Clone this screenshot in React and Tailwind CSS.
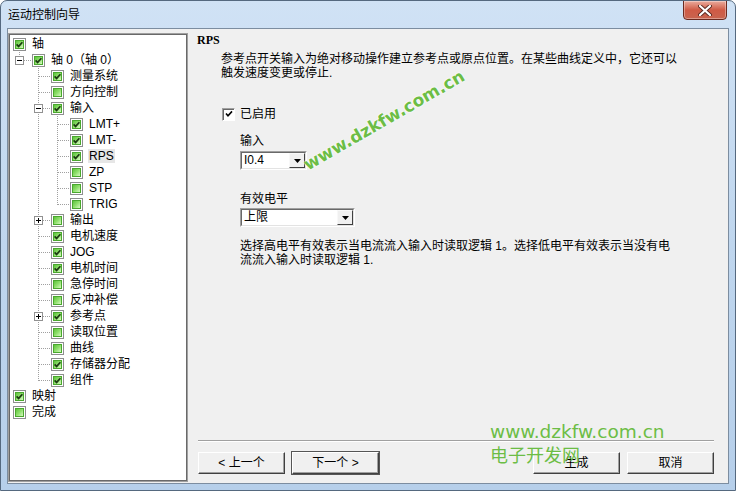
const rows = [
  { t: "轴", g: [], c: 1 },
  { t: "轴 0（轴 0）", g: ["l"], c: 1, e: "-" },
  { t: "测量系统", g: ["n", "t"], c: 1 },
  { t: "方向控制", g: ["n", "t"], c: 0 },
  { t: "输入", g: ["n", "t"], c: 1, e: "-" },
  { t: "LMT+", g: ["n", "v", "t"], c: 1 },
  { t: "LMT-", g: ["n", "v", "t"], c: 1 },
  { t: "RPS", g: ["n", "v", "t"], c: 1, sel: true },
  { t: "ZP", g: ["n", "v", "t"], c: 0 },
  { t: "STP", g: ["n", "v", "t"], c: 0 },
  { t: "TRIG", g: ["n", "v", "l"], c: 0 },
  { t: "输出", g: ["n", "t"], c: 0, e: "+" },
  { t: "电机速度", g: ["n", "t"], c: 1 },
  { t: "JOG", g: ["n", "t"], c: 1 },
  { t: "电机时间", g: ["n", "t"], c: 1 },
  { t: "急停时间", g: ["n", "t"], c: 0 },
  { t: "反冲补偿", g: ["n", "t"], c: 0 },
  { t: "参考点", g: ["n", "t"], c: 1, e: "+" },
  { t: "读取位置", g: ["n", "t"], c: 0 },
  { t: "曲线", g: ["n", "t"], c: 0 },
  { t: "存储器分配", g: ["n", "t"], c: 1 },
  { t: "组件", g: ["n", "l"], c: 1 },
  { t: "映射", g: [], c: 1 },
  { t: "完成", g: [], c: 0 },
];

// one indent cell of the tree: dotted connectors + optional expander box
function Guide({ type, exp }) {
  const dot = { stroke: "#a0a0a0", strokeDasharray: "1 1" };
  return (
    <svg width="19" height="16" className="shrink-0" shapeRendering="crispEdges">
      {(type === "v" || type === "t") && <line x1="6.5" y1="0" x2="6.5" y2="16" {...dot} />}
      {type === "l" && <line x1="6.5" y1="0" x2="6.5" y2="9" {...dot} />}
      {(type === "t" || type === "l") && <line x1="7" y1="8.5" x2="19" y2="8.5" {...dot} />}
      {exp && (
        <g>
          <rect x="2.5" y="4.5" width="8" height="8" fill="#fff" stroke="#919191" />
          <line x1="4" y1="8.5" x2="9" y2="8.5" stroke="#000" />
          {exp === "+" && <line x1="6.5" y1="6" x2="6.5" y2="11" stroke="#000" />}
        </g>
      )}
    </svg>
  );
}

function GreenBox({ checked }) {
  return (
    <span className="flex h-[13px] w-[13px] shrink-0 border border-[#8e8f8f] bg-white p-[1px]">
      <span className="flex flex-1 items-center justify-center border border-[#4aa82e] bg-gradient-to-br from-[#5cc23a] via-[#8fe06c] to-[#d6f8c0]">
        {checked ? (
          <svg width="7" height="7" viewBox="0 0 7 7">
            <path d="M0.6 3.4 L2.6 5.4 L6.4 1.2" fill="none" stroke="#1c3a12" strokeWidth="1.7" />
          </svg>
        ) : null}
      </span>
    </span>
  );
}

function Tree() {
  return (
    <div className="mt-[4px] mb-[1px] w-[180px] shrink-0 border border-[#a0a0a0]">
      <div className="h-full border border-[#696969] bg-white pt-[1px] pl-[3px]">
        {rows.map((r, i) => (
          <div key={i} className="flex h-[16px] items-center">
            {r.g.map((g, k) => (
              <Guide key={k} type={g} exp={k === r.g.length - 1 ? r.e : null} />
            ))}
            <GreenBox checked={r.c} />
            <span
              className={
                "ml-[5px] whitespace-nowrap px-[1px] leading-[14px] " +
                (r.sel ? "bg-[#e6e6e6]" : "")
              }
            >
              {r.t}
            </span>
          </div>
        ))}
      </div>
    </div>
  );
}

function Combo({ w, value }) {
  return (
    <div
      className={
        "flex h-[19px] border border-t-[#a0a0a0] border-l-[#a0a0a0] border-r-white border-b-white " + w
      }
    >
      <div className="flex flex-1 border border-t-[#696969] border-l-[#696969] border-r-[#e3e3e3] border-b-[#e3e3e3] bg-white">
        <span className="flex-1 pl-[2px] leading-[15px]">{value}</span>
        <span className="flex w-[16px] items-center justify-center border border-t-[#f8f8f8] border-l-[#f8f8f8] border-r-[#404040] border-b-[#404040] bg-[#f0f0f0]">
          <svg width="7" height="4" viewBox="0 0 7 4">
            <path d="M0 0 H7 L3.5 4 Z" fill="#000" />
          </svg>
        </span>
      </div>
    </div>
  );
}

function Btn({ children, def }) {
  return (
    <button
      className={
        "h-[22px] w-[87px] border border-t-white border-l-white border-r-[#404040] border-b-[#404040] bg-[#f0f0f0] leading-[14px] shadow-[inset_-1px_-1px_0_#a0a0a0] " +
        (def ? "outline outline-1 outline-[#555]" : "")
      }
    >
      {children}
    </button>
  );
}

export default function App() {
  return (
    <div className="relative flex h-[491px] w-[736px] flex-col overflow-hidden rounded-t-[7px] border border-[#55697f] bg-gradient-to-b from-[#d0e2f5] via-[#bfd6ee] to-[#b6cfea] font-['Liberation_Sans','Noto_Sans_CJK_SC',sans-serif] text-[12px] text-black">
      {/* title bar */}
      <div className="relative flex h-[27px] shrink-0 items-center pl-[7px]">
        <span className="leading-[14px]">运动控制向导</span>
        <div className="absolute right-[8px] top-[-1px] flex h-[20px] w-[44px] items-center justify-center rounded-b-[4px] border border-[#6b2a20] bg-gradient-to-b from-[#e9ab9d] via-[#cf5a45] to-[#c8644f] shadow-[inset_0_0_0_1px_rgba(255,255,255,0.35)]">
          <svg width="14" height="11" viewBox="0 0 14 11">
            <path d="M2 1 L12 10 M12 1 L2 10" stroke="#5b2a22" strokeWidth="4" strokeLinecap="round" />
            <path d="M2 1 L12 10 M12 1 L2 10" stroke="#fff" strokeWidth="2.2" strokeLinecap="round" />
          </svg>
        </div>
      </div>

      {/* client area */}
      <div className="mx-[6px] flex h-[456px] shrink-0 border border-[#7c8da0] bg-[#f0f0f0]">
        <Tree />

        <div className="flex flex-1 flex-col pl-[9px] pr-[14px] pt-[4px] pb-[9px]">
          <div className="font-['Liberation_Serif',serif] font-bold leading-[14px]">RPS</div>
          <div className="ml-[24px] mt-[5px] whitespace-nowrap leading-[14px]">
            参考点开关输入为绝对移动操作建立参考点或原点位置。在某些曲线定义中，它还可以
            <br />
            触发速度变更或停止.
          </div>

          <div className="ml-[25px] mt-[27px] flex h-[14px] items-center gap-[5px]">
            <span className="flex h-[13px] w-[13px] items-center justify-center border border-t-[#a0a0a0] border-l-[#a0a0a0] border-r-white border-b-white bg-white shadow-[inset_1px_1px_0_#696969]">
              <svg width="8" height="8" viewBox="0 0 8 8">
                <path d="M1 3.5 L3 5.8 L7 1.4" fill="none" stroke="#000" strokeWidth="1.6" />
              </svg>
            </span>
            <span className="leading-[14px]">已启用</span>
          </div>

          <div className="ml-[43px] mt-[13px] leading-[14px]">输入</div>
          <div className="ml-[43px] mt-[3px]">
            <Combo w="w-[67px]" value="I0.4" />
          </div>

          <div className="ml-[43px] mt-[22px] leading-[14px]">有效电平</div>
          <div className="ml-[43px] mt-[2px]">
            <Combo w="w-[115px]" value="上限" />
          </div>

          <div className="ml-[43px] mt-[12px] whitespace-nowrap leading-[14px]">
            选择高电平有效表示当电流流入输入时读取逻辑 1。选择低电平有效表示当没有电
            <br />
            流流入输入时读取逻辑 1.
          </div>

          <div className="mt-auto h-[2px] ml-[1px] border-t border-b border-t-[#a0a0a0] border-b-white" />
          <div className="mt-[10px] ml-[1px] flex gap-[7px]">
            <Btn>&lt; 上一个</Btn>
            <Btn def>下一个 &gt;</Btn>
            <div className="flex-1" />
            <Btn>生成</Btn>
            <Btn>取消</Btn>
          </div>
        </div>
      </div>

      {/* watermarks */}
      <div className="pointer-events-none absolute left-[288px] top-[108px] w-[190px] -rotate-[30deg] text-center font-['DejaVu_Sans',sans-serif] text-[17px] font-bold leading-[22px] text-[#6cbd45] [text-shadow:0_0_2px_#fff,0_0_2px_#fff]">
        www.dzkfw.com.cn
      </div>
      <div className="pointer-events-none absolute left-[489px] top-[419px] font-['DejaVu_Sans',sans-serif] text-[18.5px] leading-[24px] text-[#6cbd45]">
        www.dzkfw.com.cn
      </div>
      <div className="pointer-events-none absolute left-[489px] top-[442px] font-['Noto_Sans_CJK_SC',sans-serif] text-[18px] leading-[22px] text-[#6cbd45]">
        电子开发网
      </div>
    </div>
  );
}
